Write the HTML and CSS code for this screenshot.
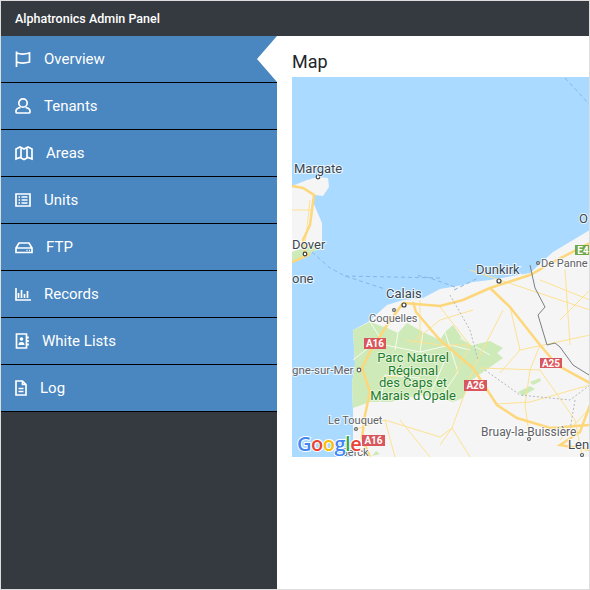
FILE: index.html
```html
<!DOCTYPE html>
<html lang="en">
<head>
    <meta charset="UTF-8">
    <meta name="viewport" content="width=device-width, initial-scale=1.0">
    <title>Alphatronics Admin Panel</title>
    <link rel="stylesheet" href="styles.css">
</head>
<body>
    <div class="frame">
        <header class="topbar">Alphatronics Admin Panel</header>
        <div class="layout">
            <nav class="sidebar">
                <a class="nav-item active">
                    <svg class="icon" width="16" height="18" viewBox="0 0 16 18"><path d="M1.500 1.500v15.500M1.500 3c4 1.500 8 1.500 13 0v9c-5 1.500-9 1.500-13 0"/></svg>
                    Overview
                </a>
                <a class="nav-item">
                    <svg class="icon" width="16" height="18" viewBox="0 0 16 18"><circle cx="8" cy="6" r="4.200"/><path d="M5.500 10.500C2.500 11 1 12 1 14v1c0 .6.500 1 1 1h12c.5 0 1-.4 1-1v-1c0-2-1.500-3-4.500-3.500"/></svg>
                    Tenants
                </a>
                <a class="nav-item">
                    <svg class="icon" width="18" height="18" viewBox="0 0 18 18"><path d="M1 5l4-2 4 2 4-2 4 2v10l-4-1.500-4 2-4-2-4 1.500zM6 3.500v10M12 3.500v10"/></svg>
                    Areas
                </a>
                <a class="nav-item">
                    <svg class="icon" width="16" height="18" viewBox="0 0 16 18"><path d="M1 3h14v12H1zM3.500 6h1.500M6.500 6h6M3.500 9h1.500M6.500 9h6M3.500 12h1.500M6.500 12h6"/></svg>
                    Units
                </a>
                <a class="nav-item">
                    <svg class="icon" width="18" height="18" viewBox="0 0 18 18"><path d="M1 10l3-5h10l3 5v4.500H1zM1 10h16M11.500 12.500h1M14 12.500h1"/></svg>
                    FTP
                </a>
                <a class="nav-item">
                    <svg class="icon" width="16" height="18" viewBox="0 0 16 18"><path d="M1 3v12h15M3.500 8v5M6.500 5v8M9.500 9v4M12.500 6v7"/></svg>
                    Records
                </a>
                <a class="nav-item">
                    <svg class="icon" width="14" height="18" viewBox="0 0 14 18"><path d="M1.500 2h10v14h-10zM13 4.500v2M13 8v2M13 11.500v2"/><circle class="solid" cx="6.500" cy="7" r="1.800"/><path class="solid" d="M3.500 13c0-2 1-3 3-3s3 1 3 3z"/></svg>
                    White Lists
                </a>
                <a class="nav-item">
                    <svg class="icon" width="12" height="18" viewBox="0 0 12 18"><path d="M1 2h6.500L11 5.500V16H1zM7.500 2v3.500H11M3.500 9.500h5M3.500 12.500h5"/></svg>
                    Log
                </a>
            </nav>
            <main class="content">
                <h2 class="page-title">Map</h2>
                <svg class="map" viewBox="292 77 298 380" width="298" height="380">
                    <rect class="sea" x="292" y="77" width="298" height="380"/>
                    <path class="land" d="M292 186L307 180 318 177 328 178 329 187 323 196 315 195 313 202 322 223 322 240 320 247 310 253 300 258 292 262z"/>
                    <path class="land" d="M353 457L353 412 352 382 355 365 353 330 368 322 387 305 403 300 423 298 440 289 463 285 473 282 490 280 530 273 553 252 573 240 590 230V457z"/>
                    <path class="park" d="M353 330L370 322 387 328 398 333 407 323 423 332 440 340 445 332 453 325 462 338 473 345 490 341 503 348 497 353 503 358 483 372 472 380 463 398 453 402 440 398 420 395 390 402 370 402 353 408 352 382 355 365z"/>
                    <path class="park" d="M292 252l15 -5 13 -6 -2 8 -10 6 -16 7zM372 456l8-2 -4-3z"/>
                    <path class="park" d="M518 392l12-6 5 3 -12 7zM530 382l10-4 1 3 -8 4z"/>
                    <path class="park-roads" d="M370 322L385 345 420 352 450 345 470 350M398 333L395 350M423 332L420 352M445 332L458 372 440 398M460 338L490 355M380 402L385 375 420 378M353 360L372 345M430 395L445 360"/>
                    <path class="minor" d="M440 307L470 345 455 375M410 345L440 320 473 310M503 310L475 365 452 428 440 445M510 307L520 350 500 373M520 350L590 335M480 368L540 370 575 420 582 455M497 404L530 402 590 385M540 345L530 370 525 405 530 440M353 430L385 420 395 457M385 420L440 437M440 437L452 428 470 457M470 270L590 310M540 280L590 300M565 270L570 345M590 290L560 320M405 340L440 345 470 345M420 300L420 345M292 210L312 210M310 200L305 245M560 440L590 408M380 378L440 370M400 420L430 457"/>
                    <path class="motorway" d="M292 186L303 188 314 195 310 225 303 240 305 252M292 262L310 254M403 303L440 306 463 300 490 288 530 275 553 262 590 243"/>
                    <path class="motorway" d="M403 303L387 325 370 352 362 368 370 392 365 415 362 438 370 457"/>
                    <path class="motorway" d="M413 302L416 312 440 340 473 368 497 405 517 418 550 428 590 425"/>
                    <path class="motorway" d="M490 288L510 307 540 345 557 365 590 383"/>
                    <path class="motorway" d="M590 405L580 432 560 445 590 450"/>
                    <path class="border" d="M530 265L535 288 545 307 538 315 547 345 555 343 560 347 573 365 589 375"/>
                    <path class="frontier" d="M450 295L470 330 478 360M485 370L520 395 570 400 590 385M575 400L570 430"/>
                    <path class="boundary" d="M455 287L430 278 415 275M454 290L478 278M565 78L590 105M312 252L330 268 345 276 385 289M345 276L440 278"/>
                    <circle class="town" cx="318" cy="177" r="1.800"/>
                    <circle class="town" cx="305" cy="254" r="1.800"/>
                    <circle class="town" cx="404" cy="305" r="2"/>
                    <circle class="town" cx="499" cy="281" r="2"/>
                    <circle class="town small" cx="394" cy="310" r="1.400"/>
                    <circle class="town small" cx="359" cy="370" r="1.800"/>
                    <circle class="town small" cx="356" cy="429" r="1.400"/>
                    <circle class="town small" cx="529" cy="439" r="1.500"/>
                    <circle class="town small" cx="538" cy="263" r="1.400"/>
                    <circle class="town small" cx="582" cy="455" r="1.500"/>
                    <text class="label" x="294" y="173">Margate</text>
                    <text class="label" x="292" y="249">Dover</text>
                    <text class="label" x="292" y="283">one</text>
                    <text class="label" x="476" y="274">Dunkirk</text>
                    <text class="label thin" x="541" y="267">De Panne</text>
                    <text class="label" x="579" y="223">O</text>
                    <text class="label" x="386" y="298">Calais</text>
                    <text class="label thin" x="369" y="322">Coquelles</text>
                    <text class="label mid" x="292" y="374">gne-sur-Mer</text>
                    <text class="label thin" x="328" y="424">Le Touquet</text>
                    <text class="label thin" x="341" y="456">Berck</text>
                    <text class="label wide" x="481" y="436">Bruay-la-Buissière</text>
                    <text class="label" x="568" y="449">Len</text>
                    <text class="park-label" x="413" y="362">Parc Naturel</text>
                    <text class="park-label" x="413" y="375">Régional</text>
                    <text class="park-label" x="413" y="387">des Caps et</text>
                    <text class="park-label" x="413" y="400">Marais d'Opale</text>
                    <rect class="shield" x="364" y="338" width="22" height="11"/>
                    <text class="shield-text" x="375" y="347">A16</text>
                    <rect class="shield" x="362" y="435" width="23" height="11"/>
                    <text class="shield-text" x="373.500" y="444">A16</text>
                    <rect class="shield" x="464" y="380" width="23" height="11"/>
                    <text class="shield-text" x="475.500" y="389">A26</text>
                    <rect class="shield" x="540" y="358" width="22" height="10"/>
                    <text class="shield-text" x="551" y="367">A25</text>
                    <rect class="shield euro" x="575" y="245" width="15" height="10"/>
                    <text class="shield-text" x="583" y="254">E4</text>
                    <text class="google" x="297" y="451"><tspan class="g-blue">G</tspan><tspan class="g-red">o</tspan><tspan class="g-yellow">o</tspan><tspan class="g-blue">g</tspan><tspan class="g-green">l</tspan><tspan class="g-red">e</tspan></text>
                </svg>
            </main>
        </div>
    </div>
</body>
</html>
```

FILE: styles.css
```css
* {
    box-sizing: border-box;
}
body {
    margin: 0;
    font-family: Roboto, Arial, sans-serif;
    background: #fff;
}
.frame {
    width: 590px;
    height: 590px;
    border: 1px solid #ddd;
    display: flex;
    flex-direction: column;
    overflow: hidden;
}
.topbar {
    height: 35px;
    flex: none;
    display: flex;
    align-items: center;
    padding-left: 14px;
    background: #343a40;
    color: #fff;
    font-size: 12.500px;
    font-weight: 500;
}
.layout {
    flex: 1;
    display: flex;
    min-height: 0;
}
.sidebar {
    width: 276px;
    flex: none;
    background: #343a40;
}
.nav-item {
    position: relative;
    height: 47px;
    display: flex;
    align-items: center;
    gap: 13px;
    padding: 0 0 1px 14px;
    background: #4a86bf;
    border-bottom: 1px solid #000;
    color: #fff;
    font-size: 15px;
}
.nav-item.active::after {
    content: "";
    position: absolute;
    top: 0;
    right: 0;
    width: 20px;
    height: 46px;
    background: #fff;
    clip-path: polygon(100% 0, 100% 100%, 0 50%);
}
.icon {
    flex: none;
    fill: none;
    stroke: #fff;
    stroke-width: 1.700;
}
.icon .solid {
    fill: #fff;
    stroke: none;
}
.content {
    flex: 1;
    min-width: 0;
    padding-left: 15px;
    overflow: hidden;
}
.page-title {
    margin: 0;
    height: 41px;
    padding-top: 15px;
    font-size: 18px;
    line-height: 21px;
    font-weight: 400;
    color: #212529;
}
.map {
    display: block;
}

/* map layers */
.sea {
    fill: #aadaff;
}
.land {
    fill: #f5f5f5;
}
.park {
    fill: #cdeab8;
}
.park-roads {
    fill: none;
    stroke: #fff;
    stroke-width: 1;
    opacity: .8;
}
.minor {
    fill: none;
    stroke: #fde293;
    stroke-width: 1;
}
.motorway {
    fill: none;
    stroke: #fdd77a;
    stroke-width: 2.500;
}
.border {
    fill: none;
    stroke: #7a7f85;
    stroke-width: 1;
}
.frontier {
    fill: none;
    stroke: #b4b8bc;
    stroke-width: 1;
    stroke-dasharray: 2 2;
}
.boundary {
    fill: none;
    stroke: #8ab4e8;
    stroke-width: 1;
    stroke-dasharray: 4 3;
}
.town {
    fill: #fff;
    stroke: #3c4043;
    stroke-width: 1.200;
}
.town.small {
    stroke: #5f6368;
}
.label {
    font-size: 13px;
    fill: #3c4852;
    stroke: #fff;
    stroke-width: 2;
    stroke-opacity: .75;
    paint-order: stroke;
}
.label.thin {
    font-size: 11px;
    fill: #5f6368;
}
.label.mid {
    font-size: 11.500px;
    fill: #5f6368;
}
.label.wide {
    font-size: 12px;
    fill: #5f6368;
}
.park-label {
    font-size: 13px;
    fill: #1e7d2c;
    text-anchor: middle;
    stroke: #fff;
    stroke-width: 2;
    stroke-opacity: .5;
    paint-order: stroke;
}
.shield {
    fill: #d9565c;
}
.shield.euro {
    fill: #6fa748;
}
.shield-text {
    font-size: 10px;
    font-weight: 700;
    fill: #fff;
    text-anchor: middle;
}
.google {
    font-family: "Open Sans", Arial, sans-serif;
    font-size: 20px;
    font-weight: 600;
    letter-spacing: -.5px;
    stroke: #fff;
    stroke-width: 2;
    paint-order: stroke;
}
.g-blue {
    fill: #4285f4;
}
.g-red {
    fill: #ea4335;
}
.g-yellow {
    fill: #fbbc05;
}
.g-green {
    fill: #34a853;
}
```
